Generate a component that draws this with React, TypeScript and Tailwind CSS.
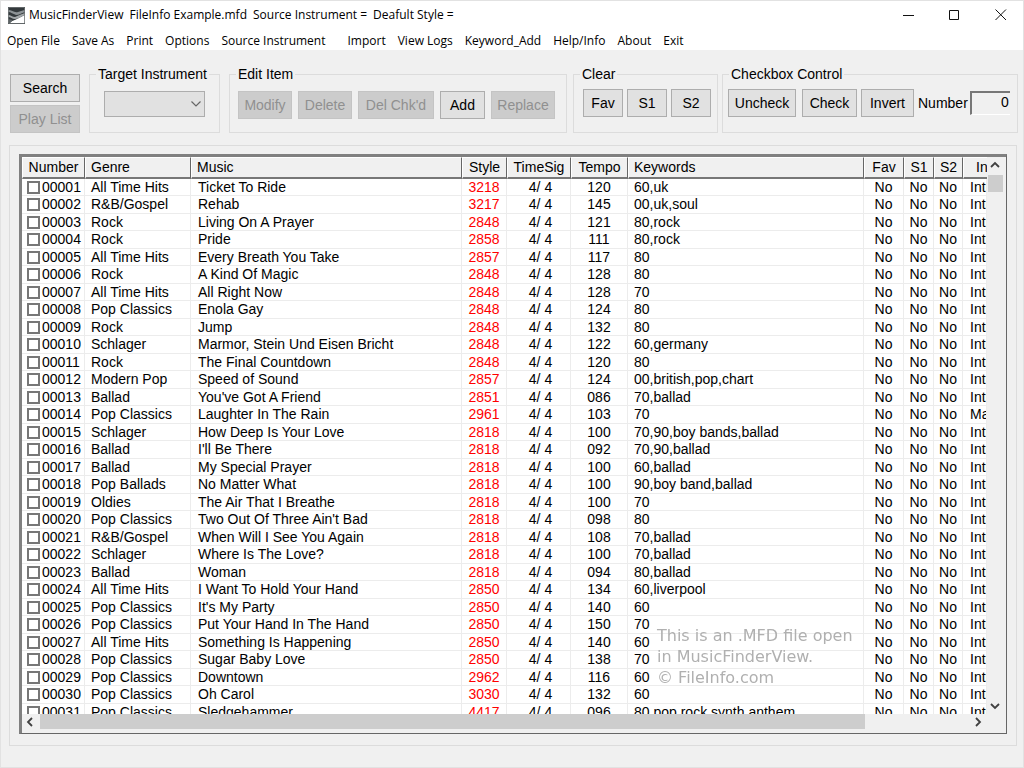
import { useState } from "react";
import type { ReactNode } from "react";

type Song = [genre: string, music: string, style: string, tempo: string, keywords: string, instrument?: string];

const songs: Song[] = [
  ["All Time Hits", "Ticket To Ride", "3218", "120", "60,uk"],
  ["R&B/Gospel", "Rehab", "3217", "145", "00,uk,soul"],
  ["Rock", "Living On A Prayer", "2848", "121", "80,rock"],
  ["Rock", "Pride", "2858", "111", "80,rock"],
  ["All Time Hits", "Every Breath You Take", "2857", "117", "80"],
  ["Rock", "A Kind Of Magic", "2848", "128", "80"],
  ["All Time Hits", "All Right Now", "2848", "128", "70"],
  ["Pop Classics", "Enola Gay", "2848", "124", "80"],
  ["Rock", "Jump", "2848", "132", "80"],
  ["Schlager", "Marmor, Stein Und Eisen Bricht", "2848", "122", "60,germany"],
  ["Rock", "The Final Countdown", "2848", "120", "80"],
  ["Modern Pop", "Speed of Sound", "2857", "124", "00,british,pop,chart"],
  ["Ballad", "You've Got A Friend", "2851", "086", "70,ballad"],
  ["Pop Classics", "Laughter In The Rain", "2961", "103", "70", "Main"],
  ["Schlager", "How Deep Is Your Love", "2818", "100", "70,90,boy bands,ballad"],
  ["Ballad", "I'll Be There", "2818", "092", "70,90,ballad"],
  ["Ballad", "My Special Prayer", "2818", "100", "60,ballad"],
  ["Pop Ballads", "No Matter What", "2818", "100", "90,boy band,ballad"],
  ["Oldies", "The Air That I Breathe", "2818", "100", "70"],
  ["Pop Classics", "Two Out Of Three Ain't Bad", "2818", "098", "80"],
  ["R&B/Gospel", "When Will I See You Again", "2818", "108", "70,ballad"],
  ["Schlager", "Where Is The Love?", "2818", "100", "70,ballad"],
  ["Ballad", "Woman", "2818", "094", "80,ballad"],
  ["All Time Hits", "I Want To Hold Your Hand", "2850", "134", "60,liverpool"],
  ["Pop Classics", "It's My Party", "2850", "140", "60"],
  ["Pop Classics", "Put Your Hand In The Hand", "2850", "150", "70"],
  ["All Time Hits", "Something Is Happening", "2850", "140", "60"],
  ["Pop Classics", "Sugar Baby Love", "2850", "138", "70"],
  ["Pop Classics", "Downtown", "2962", "116", "60"],
  ["Pop Classics", "Oh Carol", "3030", "132", "60"],
  ["Pop Classics", "Sledgehammer", "4417", "096", "80,pop,rock,synth,anthem"],
];

const menus = ["Open File", "Save As", "Print", "Options", "Source Instrument", "Import", "View Logs", "Keyword_Add", "Help/Info", "About", "Exit"];

const columns = [
  { label: "Number", cls: "text-center" },
  { label: "Genre", cls: "text-left" },
  { label: "Music", cls: "text-left" },
  { label: "Style", cls: "text-center" },
  { label: "TimeSig", cls: "text-center" },
  { label: "Tempo", cls: "text-center" },
  { label: "Keywords", cls: "text-left" },
  { label: "Fav", cls: "text-center" },
  { label: "S1", cls: "text-center" },
  { label: "S2", cls: "text-center" },
  { label: "Intro", cls: "text-left" },
];

function Group({ title, className, children }: { title: string; className: string; children: ReactNode }) {
  return (
    <fieldset className={`h-[69px] border border-[#dcdcdc] ${className}`}>
      <legend className="ml-1.5 h-5 px-0.5 leading-5">{title}</legend>
      {children}
    </fieldset>
  );
}

function Btn({ children, className, disabled }: { children: ReactNode; className: string; disabled?: boolean }) {
  return (
    <button
      type="button"
      disabled={disabled}
      className={`h-7 shrink-0 border border-[#adadad] bg-[#e1e1e1] text-center text-black disabled:border-[#c4c4c4] disabled:bg-[#cccccc] disabled:text-[#909090] ${className}`}
    >
      {children}
    </button>
  );
}

function Chevron({ d, label }: { d: string; label: string }) {
  return (
    <button type="button" aria-label={label} className="flex size-4 shrink-0 items-center justify-center">
      <svg viewBox="0 0 10 10" className="size-2.5" fill="none" stroke="#404040" strokeWidth="1.8">
        <path d={d} />
      </svg>
    </button>
  );
}

function TitleBar() {
  return (
    <header className="flex h-7 shrink-0 items-center pl-[7px] pr-4">
      <svg viewBox="0 0 17 17" className="size-[17px] shrink-0">
        <rect width="17" height="17" fill="#33393c" />
        <path d="M0 3C4 3 6 6 10 5C12 4 14 4 17 3V5C13 6 11 8 8 8C5 7 3 5 0 5Z" fill="#8d9396" />
        <path d="M0 8C3 8 4 10 7 10C10 9 13 7 17 6V8C13 9 11 12 7 12C4 12 3 10 0 10Z" fill="#a2a7a9" />
        <path d="M2 16C4 13 6 14 9 12C12 11 14 9 17 8V16Z" fill="#fff" />
        <path d="M0 12C2 12 3 13 5 13L2 16H0Z" fill="#5c6265" />
        <path d="M.5.5H16.5V16.5H.5Z" fill="none" stroke="#6e7375" strokeWidth=".8" />
      </svg>
      <h1 className="ml-1 flex flex-1 gap-1.5 whitespace-nowrap font-['Open_Sans',sans-serif] text-xs">
        <span>MusicFinderView</span>
        <span>FileInfo Example.mfd</span>
        <span>Source Instrument =</span>
        <span>Deafult Style =</span>
      </h1>
      <div className="flex gap-[34px]">
        <button type="button" aria-label="Minimize" className="size-3">
          <svg viewBox="0 0 12 12" className="size-3" stroke="#111"><path d="M0 6.5H11" /></svg>
        </button>
        <button type="button" aria-label="Maximize" className="size-3">
          <svg viewBox="0 0 12 12" className="size-3" fill="none" stroke="#111"><path d="M.5 1.5H9.5V10.5H.5Z" /></svg>
        </button>
        <button type="button" aria-label="Close" className="size-3">
          <svg viewBox="0 0 12 12" className="size-3" stroke="#111"><path d="M.5.5L11 11M11 .5L.5 11" /></svg>
        </button>
      </div>
    </header>
  );
}

function Toolbar() {
  return (
    <div className="flex h-[83px] shrink-0 items-end pl-[9px] pr-[7px]">
      <div className="mr-[9px] flex shrink-0 flex-col gap-[3px]">
        <Btn className="w-[70px]">Search</Btn>
        <Btn className="w-[70px]" disabled>Play List</Btn>
      </div>
      <Group title="Target Instrument" className="mr-[9px] w-[131px] shrink-0">
        <div className="relative mx-3.5 mt-[7px]">
          <select aria-label="Target Instrument" className="h-[26px] w-full appearance-none border border-[#adadad] bg-[#e1e1e1] px-2">
            <option></option>
          </select>
          <svg viewBox="0 0 10 6" className="pointer-events-none absolute right-1 top-2.5 h-1.5 w-2.5" fill="none" stroke="#666" strokeWidth="1.2">
            <path d="M.5.5L5 5L9.5.5" />
          </svg>
        </div>
      </Group>
      <Group title="Edit Item" className="mr-1.5 w-[338px] shrink-0">
        <div className="mt-[7px] flex gap-1.5 pl-2">
          <Btn className="w-[54px]" disabled>Modify</Btn>
          <Btn className="w-[54px]" disabled>Delete</Btn>
          <Btn className="w-[76px]" disabled>Del Chk'd</Btn>
          <Btn className="w-[45px]">Add</Btn>
          <Btn className="w-16" disabled>Replace</Btn>
        </div>
      </Group>
      <Group title="Clear" className="mr-1 w-[145px] shrink-0">
        <div className="mt-[5px] flex gap-1 pl-[9px]">
          <Btn className="w-10">Fav</Btn>
          <Btn className="w-10">S1</Btn>
          <Btn className="w-10">S2</Btn>
        </div>
      </Group>
      <Group title="Checkbox Control" className="flex-1">
        <div className="mt-[5px] flex items-center pl-[5px] pr-[7px]">
          <Btn className="mr-1.5 w-[68px]">Uncheck</Btn>
          <Btn className="mr-1 w-[55px]">Check</Btn>
          <Btn className="mr-1 w-[53px]">Invert</Btn>
          <label htmlFor="count" className="mr-0.5 shrink-0">Number</label>
          <input id="count" defaultValue="0" className="h-6 w-10 min-w-0 flex-1 border-b border-l-2 border-t-2 border-b-white border-l-[#777] border-t-[#777] bg-[#f0f0f0] pb-1 pr-px text-right" />
        </div>
      </Group>
    </div>
  );
}

function SongTable() {
  const [checked, setChecked] = useState<Record<string, boolean>>({});
  const cell = "truncate border-b border-r border-[#ececec] text-clip";
  return (
    <table className="w-full table-fixed border-separate border-spacing-0">
      <colgroup>
        <col className="w-[63px]" />
        <col className="w-[106px]" />
        <col className="w-[271px]" />
        <col className="w-[45px]" />
        <col className="w-16" />
        <col className="w-[57px]" />
        <col />
        <col className="w-10" />
        <col className="w-[30px]" />
        <col className="w-[29px]" />
        <col className="w-6" />
      </colgroup>
      <thead>
        <tr>
          {columns.map(({ label, cls }, i) => (
            <th
              key={label}
              className={`sticky top-0 h-[22px] overflow-hidden border-b-2 border-l border-t border-b-[#777] border-l-white border-t-white bg-[#f0f0f0] p-0 font-normal leading-[19px] ${cls} ${i === 10 ? "pl-3" : "border-r border-r-[#666] text-clip"} ${cls === "text-left" && i !== 10 ? "pl-[5px]" : ""}`}
            >
              {label}
            </th>
          ))}
        </tr>
      </thead>
      <tbody>
        {songs.map(([genre, music, style, tempo, keywords, instrument = "Intro"], i) => {
          const id = String(i + 1).padStart(5, "0");
          return (
            <tr key={id} className="h-[17px] leading-4 even:h-[18px] even:leading-[17px]">
              <td className={cell}>
                <label className="flex items-center gap-0.5 pl-[5px]">
                  <input
                    type="checkbox"
                    checked={!!checked[id]}
                    onChange={(e) => setChecked({ ...checked, [id]: e.target.checked })}
                    className="size-[13px] shrink-0 appearance-none border-2 border-[#777] bg-white checked:bg-[#777]"
                  />
                  {id}
                </label>
              </td>
              <td className={`${cell} pl-1.5`}>{genre}</td>
              <td className={`${cell} pl-[7px]`}>{music}</td>
              <td className={`${cell} text-center text-[#ff0000]`}>{style}</td>
              <td className={`${cell} pl-1 text-center`}>4/ 4</td>
              <td className={`${cell} text-center`}>{tempo}</td>
              <td className={`${cell} pl-1.5`}>{keywords}</td>
              <td className={`${cell} text-center`}>No</td>
              <td className={`${cell} text-center`}>No</td>
              <td className={`${cell} text-center`}>No</td>
              <td className={`${cell} pl-[7px]`}>{instrument}</td>
            </tr>
          );
        })}
      </tbody>
    </table>
  );
}

export default function App() {
  return (
    <div className="flex h-screen flex-col border border-[#e2e2e2] bg-[#f0f0f0] font-['Liberation_Sans',Arial,sans-serif] text-sm text-black">
      <div className="shrink-0 bg-white">
        <TitleBar />
        <nav className="flex h-[21px] items-center gap-3 pl-1.5 pt-0.5 font-['Open_Sans',sans-serif] text-xs">
          {menus.map((m) => (
            <button key={m} type="button" className={`whitespace-nowrap leading-4 ${m === "Import" ? "ml-2.5" : ""}`}>{m}</button>
          ))}
        </nav>
      </div>
      <Toolbar />
      <main className="mb-[21px] ml-2 mr-1.5 mt-3 flex min-h-0 flex-1 flex-col border border-[#dcdcdc] px-[9px] pb-[11px] pt-2">
        <div className="relative flex min-h-0 flex-1 flex-col border-b border-l-[3px] border-r border-t-[3px] border-[#808080] border-b-[#666] border-r-[#666] pb-[3px] pr-[3px]">
          <div className="flex min-h-0 flex-1">
            <div className="min-w-0 flex-1 overflow-auto bg-white [scrollbar-width:none]">
              <SongTable />
            </div>
            <div className="flex w-4 shrink-0 flex-col items-center">
              <Chevron label="Scroll up" d="M1 7L5 3L9 7" />
              <div className="mt-0.5 h-[17px] w-[15px] bg-[#cdcdcd]" />
              <div className="flex-1" />
              <Chevron label="Scroll down" d="M1 3L5 7L9 3" />
            </div>
          </div>
          <div className="flex h-4 shrink-0 items-center pr-[17px]">
            <Chevron label="Scroll left" d="M7 1L3 5L7 9" />
            <div className="ml-0.5 flex h-full flex-1 pr-[105px]">
              <div className="h-[15px] flex-1 bg-[#cdcdcd]" />
            </div>
            <Chevron label="Scroll right" d="M3 1L7 5L3 9" />
          </div>
          <p className="pointer-events-none absolute bottom-[45px] right-[145px] w-[204px] whitespace-nowrap font-['DejaVu_Sans',sans-serif] text-base leading-[21px] text-[#b0b0b0]">
            This is an .MFD file open
            <br />
            in MusicFinderView.
            <br />
            © FileInfo.com
          </p>
        </div>
      </main>
    </div>
  );
}
